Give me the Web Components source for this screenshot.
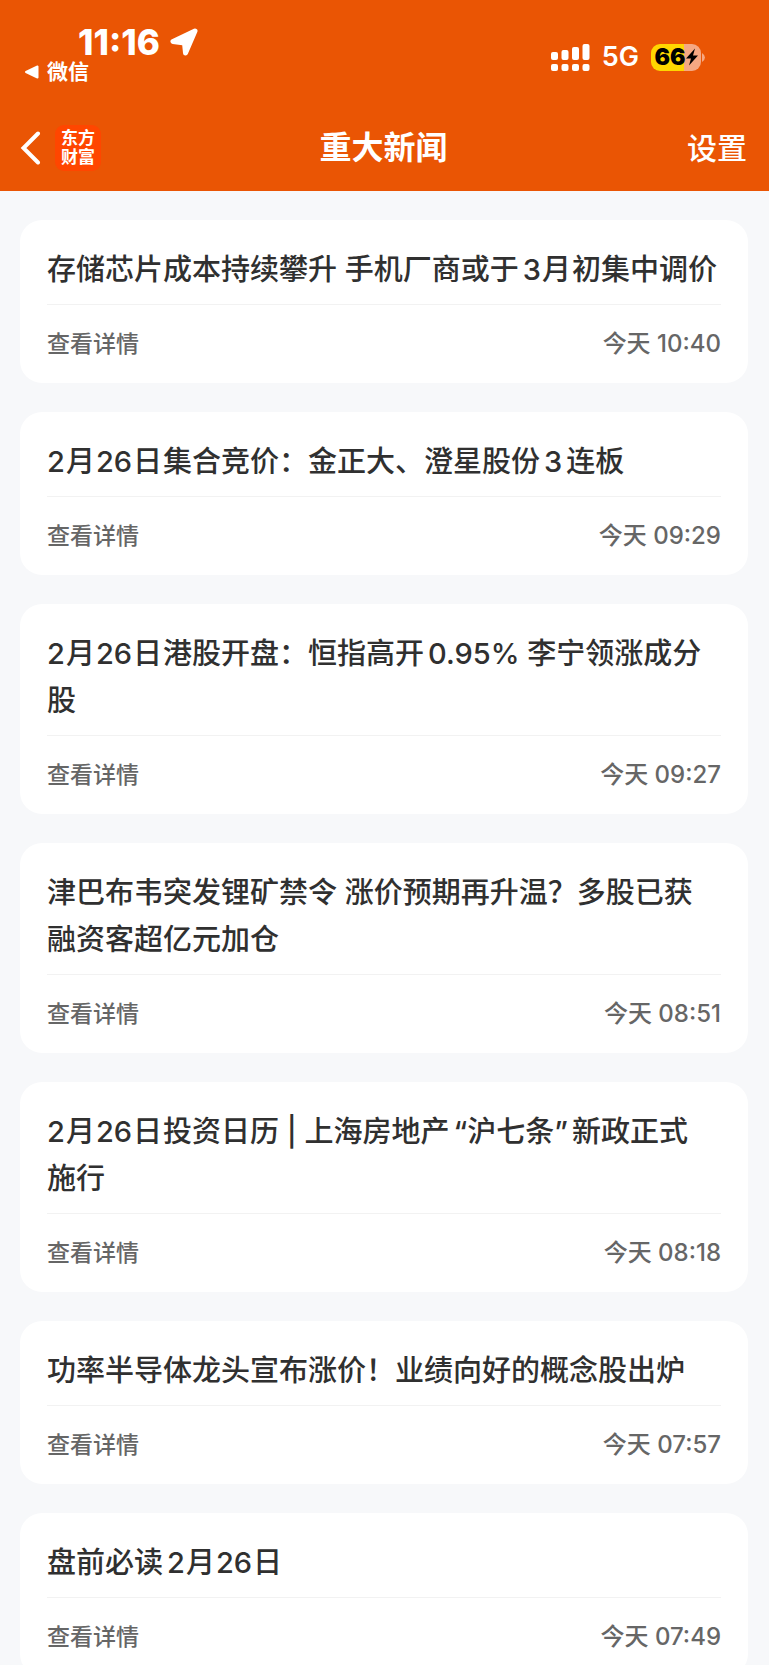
<!DOCTYPE html>
<html lang="zh-CN">
<head>
<meta charset="utf-8">
<meta name="viewport" content="width=device-width, initial-scale=1">
<title>重大新闻</title>
<style>
  body {
    margin: 0;
    background: #f7f8fa;
    color: #303030;
    font-family: Inter, "Noto Sans CJK SC", sans-serif;
  }
  /* Spacing between Han characters and the digits or quotes beside them */
  .unit { margin: 0 1px; }
  .lead { margin-left: 4px; }
  .trail { margin-right: 4px; }
  .keep { white-space: nowrap; }
</style>
</head>
<body>
<news-page>
  <status-bar slot="top" time="11:16" back="微信" network="5G" battery="66"></status-bar>
  <nav-bar slot="top">重大新闻</nav-bar>
  <news-card time="今天 10:40">存储芯片成本持续攀升 手机厂商或于<span class="lead">3</span><span class="unit">月</span>初集中调价</news-card>
  <news-card time="今天 09:29">2<span class="unit">月</span>26<span class="unit">日</span>集合竞价：金正大、澄星股份<span class="lead trail">3</span>连板</news-card>
  <news-card time="今天 09:27">2<span class="unit">月</span>26<span class="unit">日</span>港股开盘：恒指高开<span class="lead">0.95%</span> 李宁领涨成分<span class="keep">股</span></news-card>
  <news-card time="今天 08:51">津巴布韦突发锂矿禁令 涨价预期再升温？多股已获融资客超亿元加仓</news-card>
  <news-card time="今天 08:18">2<span class="unit">月</span>26<span class="unit">日</span>投资日历 | 上海房地产<span class="lead">“</span>沪七条<span class="trail">”</span>新政正式<span class="keep">施行</span></news-card>
  <news-card time="今天 07:57">功率半导体龙头宣布涨价！业绩向好的概念股出炉</news-card>
  <news-card time="今天 07:49">盘前必读<span class="lead">2</span><span class="unit">月</span>26<span class="unit">日</span></news-card>
</news-page>

<template id="news-page">
  <style>
    :host { display: block; }
    header { background: #ea5504; color: #fff; }
    main { display: flex; flex-direction: column; gap: 29px; padding: 29px 21px 29px 20px; }
  </style>
  <header><slot name="top"></slot></header>
  <main><slot></slot></main>
</template>

<template id="status-bar">
  <style>
    :host { display: flex; justify-content: space-between; padding: 24px 64px 0 24px; height: 80px; }
    .left { display: flex; flex-direction: column; }
    .clock { display: flex; align-items: center; gap: 10px; padding-left: 54px; font-size: 35px; line-height: 36px; font-weight: 800; }
    a { display: flex; align-items: center; gap: 8px; color: inherit; text-decoration: none; font-size: 21px; line-height: 24px; font-weight: 700; }
    .right { display: flex; align-items: center; align-self: flex-start; gap: 12px; height: 66px; }
    .network { font-size: 27px; line-height: 32px; font-weight: 600; }
    .battery { display: flex; align-items: center; gap: 1px; }
    .cell { display: flex; align-items: center; justify-content: center; box-sizing: border-box; width: 50px; height: 27px; border-radius: 9px; color: #000; font-size: 23px; line-height: 27px; font-weight: 900; background: linear-gradient(90deg, #ffd600 66%, #f5a883 66%); }
    svg { display: block; flex: none; }
  </style>
  <div class="left">
    <div class="clock"><span class="time"></span>
      <svg width="28" height="28" viewBox="0 0 28 28" fill="#fff" stroke="#fff" stroke-width="5" stroke-linejoin="round" aria-hidden="true"><path d="M25 3 3 13.500l11.500 1.500L15.500 25Z"/></svg>
    </div>
    <a href="#back">
      <svg width="15" height="14" viewBox="0 0 15 14" fill="#fff" stroke="#fff" stroke-width="2" stroke-linejoin="round" aria-hidden="true"><path d="M2 7 13.500 1.500v11Z"/></svg>
      <span class="back"></span>
    </a>
  </div>
  <div class="right">
    <svg width="39" height="27" viewBox="0 0 39 27" fill="#fff" aria-hidden="true">
      <rect x="0" y="8" width="7" height="8" rx="2"/><rect x="10.500" y="6" width="7" height="10" rx="2"/><rect x="21" y="3" width="7" height="13" rx="2"/><rect x="31.500" y="0" width="7" height="16" rx="2"/>
      <rect x="0" y="20" width="7" height="7" rx="2"/><rect x="10.500" y="20" width="7" height="7" rx="2"/><rect x="21" y="20" width="7" height="7" rx="2"/><rect x="31.500" y="20" width="7" height="7" rx="2"/>
    </svg>
    <span class="network"></span>
    <span class="battery">
      <span class="cell"><span class="level"></span>
        <svg width="12" height="18" viewBox="0 0 12 18" aria-hidden="true"><path d="M9 .5 0 10.500h5L3 17.500 12 7.500H7Z"/></svg>
      </span>
      <svg width="3" height="9" viewBox="0 0 3 9" fill="#f5a883" aria-hidden="true"><path d="M0 0Q3 2 3 4.500T0 9Z"/></svg>
    </span>
  </div>
</template>

<template id="nav-bar">
  <style>
    :host { display: grid; grid-template-columns: 1fr auto 1fr; align-items: center; height: 87px; padding: 0 22px 0 20px; }
    .left { display: flex; align-items: center; gap: 14px; }
    button { display: block; margin: 0; padding: 0; border: 0; background: none; color: inherit; font: inherit; }
    svg { display: block; }
    .logo { display: flex; align-items: center; justify-content: center; width: 46px; height: 46px; border-radius: 9px; background: #ff4600; color: #fff; text-decoration: none; font-size: 17px; line-height: 19px; font-weight: 700; text-align: center; }
    h1 { margin: 0; font-size: 32px; line-height: 40px; font-weight: 700; }
    .settings { justify-self: end; font-size: 30px; line-height: 40px; font-weight: 500; }
  </style>
  <div class="left">
    <button type="button" aria-label="返回"><svg width="21" height="34" viewBox="0 0 21 34" fill="none" stroke="#fff" stroke-width="4" stroke-linecap="round" stroke-linejoin="miter"><path d="M18 2.500 3.500 17 18 31.500"/></svg></button>
    <a class="logo" href="#home"><span>东方<br>财富</span></a>
  </div>
  <h1><slot></slot></h1>
  <button class="settings" type="button">设置</button>
</template>

<template id="news-card">
  <style>
    :host { display: block; padding: 26px 27px 0; border-radius: 22px; background: #fff; }
    h2 { margin: 0; padding-bottom: 11px; border-bottom: 1px solid #f2f2f2; font-size: 29px; line-height: 47px; font-weight: 500; }
    footer { display: flex; align-items: center; justify-content: space-between; height: 78px; color: #666; font-size: 23px; line-height: 32px; font-weight: 500; }
    a { color: inherit; text-decoration: none; }
    time { font-size: 24px; }
  </style>
  <h2><slot></slot></h2>
  <footer><a href="#detail">查看详情</a><time></time></footer>
</template>

<script>
  class TemplateElement extends HTMLElement {
    constructor() {
      super();
      const template = document.getElementById(this.localName);
      this.attachShadow({ mode: "open" }).append(template.content.cloneNode(true));
    }
    fill(selector, attribute) {
      this.shadowRoot.querySelector(selector).textContent = this.getAttribute(attribute);
    }
  }

  class NewsPage extends TemplateElement {}

  class NavBar extends TemplateElement {}

  class StatusBar extends TemplateElement {
    connectedCallback() {
      this.fill(".time", "time");
      this.fill(".back", "back");
      this.fill(".network", "network");
      this.fill(".level", "battery");
    }
  }

  class NewsCard extends TemplateElement {
    connectedCallback() {
      this.fill("time", "time");
    }
  }

  customElements.define("news-page", NewsPage);
  customElements.define("status-bar", StatusBar);
  customElements.define("nav-bar", NavBar);
  customElements.define("news-card", NewsCard);
</script>
</body>
</html>
